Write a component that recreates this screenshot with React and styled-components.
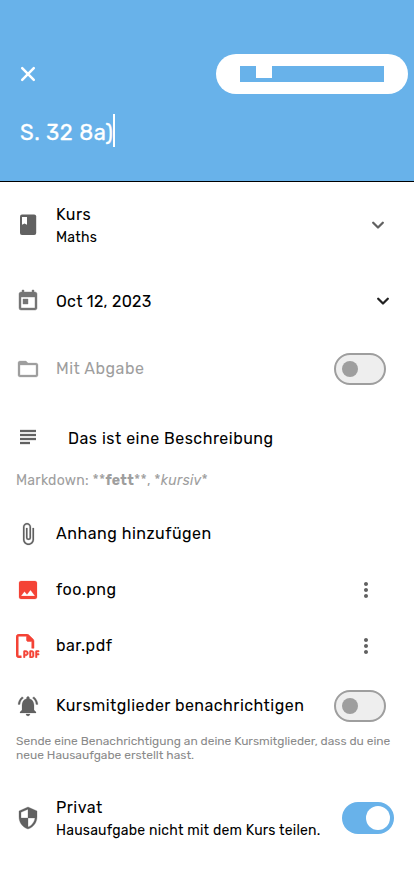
import React from "react";
import styled, { createGlobalStyle } from "styled-components";
import {
  MdToday, MdFolderOpen, MdAttachFile, MdImage,
  MdNotificationsActive, MdSecurity, MdMoreVert,
} from "react-icons/md";
import { FaRegFilePdf } from "react-icons/fa6";

const GlobalStyle = createGlobalStyle`
  * { box-sizing: border-box; }
  body { margin: 0; background: #fff; font-family: Rubik, Roboto, sans-serif; color: #000; }
`;

const Page = styled.main`
  width: 414px;
  height: 896px;
  overflow: hidden;
  background: #fff;
`;

const Header = styled.header`
  height: 182px;
  padding-top: 54px;
  background: #68b2ea;
  border-bottom: 1px solid #000;
`;

const Toolbar = styled.div`
  display: flex;
  align-items: center;
  justify-content: space-between;
  height: 40px;
  padding: 0 6px 0 16px;
  color: #fff;
`;

const SaveButton = styled.button`
  display: flex;
  width: 192px;
  height: 40px;
  padding: 12px 24px;
  border: 0;
  border-radius: 20px;
  background: #fff;
`;

const Redaction = styled.span`
  width: 144px;
  height: 16px;
  padding-left: 16px;
  background: #68b2ea;
`;

const Notch = styled.span`
  display: block;
  width: 16px;
  height: 12px;
  background: #fff;
`;

const TitleField = styled.div`
  display: flex;
  height: 33px;
  margin: 20px 0 0 20px;
  color: #fff;
  font-size: 22px;
  line-height: 37px;
  letter-spacing: 0.5px;
  -webkit-text-stroke: 0.3px #fff;
  white-space: nowrap;
`;

const Caret = styled.span`
  width: 2px;
  height: 33px;
  background: #fff;
`;

const Row = styled.section`
  display: flex;
  align-items: center;
  height: ${(p) => p.$height}px;
  padding: ${(p) => p.$top ?? 0}px ${(p) => p.$end ?? 24}px 0 16px;
  color: ${(p) => p.$color ?? "#000"};
`;

const IconBox = styled.span`
  display: flex;
  width: 24px;
  height: 24px;
  flex: none;
  margin-right: ${(p) => p.$gap ?? 16}px;
  margin-bottom: ${(p) => p.$lift ?? 0}px;
  color: ${(p) => p.$color ?? "#616161"};

  path[fill="none"] {
    stroke: none;
  }
`;

const Texts = styled.div`
  flex: 1;
  min-width: 0;
  padding-top: ${(p) => p.$drop ?? 0}px;
  white-space: nowrap;
`;

const Label = styled.div`
  font-size: 16px;
  line-height: 24px;
  letter-spacing: ${(p) => p.$spacing ?? 0.5}px;
`;

const SubLabel = styled.div`
  font-size: 14px;
  line-height: 22px;
  letter-spacing: ${(p) => p.$spacing ?? 0.25}px;
`;

const Hint = styled.p`
  height: ${(p) => p.$height}px;
  margin: 0 0 0 16px;
  padding-top: ${(p) => p.$top ?? 0}px;
  color: ${(p) => p.$color};
  font-size: ${(p) => p.$size}px;
  line-height: ${(p) => p.$line}px;
  letter-spacing: ${(p) => p.$spacing}px;
  white-space: nowrap;
`;

const HintLine = styled.span`
  display: block;
`;

const Track = styled.button`
  display: flex;
  flex: none;
  align-items: center;
  justify-content: ${(p) => (p.$on ? "flex-end" : "flex-start")};
  width: 52px;
  height: 32px;
  padding: 0 ${(p) => (p.$on ? 4 : 6)}px;
  border: ${(p) => (p.$on ? "0" : "2px solid #9e9e9e")};
  border-radius: 16px;
  background: ${(p) => (p.$on ? "#68b2ea" : "#eee")};
`;

const Thumb = styled.span`
  width: ${(p) => (p.$on ? 24 : 16)}px;
  height: ${(p) => (p.$on ? 24 : 16)}px;
  border-radius: 50%;
  background: ${(p) => (p.$on ? "#fff" : "#9e9e9e")};
`;

const Toggle = ({ on = false }) => (
  <Track $on={on} role="switch" aria-checked={on}>
    <Thumb $on={on} />
  </Track>
);

const StrokeIcon = ({ d, color = "currentColor", width = 2.3, cap = "round" }) => (
  <svg width="24" height="24" viewBox="0 0 24 24" fill="none" stroke={color}
    strokeWidth={width} strokeLinecap={cap} strokeLinejoin="round">
    <path d={d} />
  </svg>
);

const Chevron = ({ color }) => <StrokeIcon color={color} d="M7.2 9.8L12 14.5l4.8-4.7" />;

const SubjectIcon = () => (
  <svg width="24" height="24" viewBox="0 0 24 24" fill="none" stroke="currentColor" strokeWidth="2.3">
    <g>
      <line x1="4" y1="6" x2="20" y2="6" />
      <line x1="4" y1="10" x2="20" y2="10" />
      <line x1="4" y1="14" x2="20" y2="14" />
      <line x1="4" y1="18" x2="14" y2="18" />
    </g>
  </svg>
);

const BookIcon = () => (
  <svg width="24" height="24" viewBox="0 0 24 24">
    <rect x="4" y="1.5" width="16.2" height="20.5" rx="2" fill="currentColor" />
    <path d="M6 4h5v7.8L8.5 10.5 6 11.8z" fill="#fff" />
  </svg>
);

export default function App() {
  return (
    <>
      <GlobalStyle />
      <Page>
        <Header>
          <Toolbar>
            <StrokeIcon d="M6.2 6.2l11.6 11.6M17.8 6.2L6.2 17.8" width={2.5} />
            <SaveButton><Redaction><Notch /></Redaction></SaveButton>
          </Toolbar>
          <TitleField>S. 32 8a)<Caret /></TitleField>
        </Header>

        <Row $height={86}>
          <IconBox><BookIcon /></IconBox>
          <Texts $drop={2}>
            <Label>Kurs</Label>
            <SubLabel>Maths</SubLabel>
          </Texts>
          <Chevron color="#616161" />
        </Row>

        <Row $height={66} $end={19}>
          <IconBox $color="#757575"><MdToday size={24} strokeWidth={0.4} /></IconBox>
          <Texts $drop={2}><Label $spacing={0.25}>Oct 12, 2023</Label></Texts>
          <Chevron color="#212121" />
        </Row>

        <Row $height={70} $end={28} $color="#9e9e9e">
          <IconBox $color="#9e9e9e"><MdFolderOpen size={24} strokeWidth={0.3} /></IconBox>
          <Texts><Label>Mit Abgabe</Label></Texts>
          <Toggle />
        </Row>

        <Row $height={68}>
          <IconBox $gap={28} $lift={2}><SubjectIcon /></IconBox>
          <Texts $drop={2}><Label>Das ist eine Beschreibung</Label></Texts>
        </Row>
        <Hint $height={34} $top={1} $size={14} $line={16} $spacing={0.25} $color="#9e9e9e">
          Markdown: **<b>fett</b>**, *<i>kursiv</i>*
        </Hint>

        <Row $height={56}>
          <IconBox><MdAttachFile size={24} strokeWidth={0.2} /></IconBox>
          <Texts><Label>Anhang hinzufügen</Label></Texts>
        </Row>
        <Row $height={56} $end={36}>
          <IconBox $color="#f44336"><MdImage size={24} strokeWidth={0.2} /></IconBox>
          <Texts><Label>foo.png</Label></Texts>
          <MdMoreVert size={24} color="#616161" />
        </Row>
        <Row $height={56} $end={36}>
          <IconBox $color="#f44336"><FaRegFilePdf size={24} strokeWidth={10} /></IconBox>
          <Texts><Label>bar.pdf</Label></Texts>
          <MdMoreVert size={24} color="#616161" />
        </Row>

        <Row $height={60} $top={4} $end={28}>
          <IconBox><MdNotificationsActive size={24} strokeWidth={0.2} /></IconBox>
          <Texts><Label $spacing={0.47}>Kursmitglieder benachrichtigen</Label></Texts>
          <Toggle />
        </Row>
        <Hint $height={28} $size={12} $line={14} $spacing={-0.01} $color="#8a8a8a">
          <HintLine>Sende eine Benachrichtigung an deine Kursmitglieder, dass du eine</HintLine>
          <HintLine>neue Hausaufgabe erstellt hast.</HintLine>
        </Hint>

        <Row $height={112} $end={20}>
          <IconBox><MdSecurity size={24} strokeWidth={0.3} /></IconBox>
          <Texts $drop={2}>
            <Label>Privat</Label>
            <SubLabel $spacing={0.22}>Hausaufgabe nicht mit dem Kurs teilen.</SubLabel>
          </Texts>
          <Toggle on />
        </Row>
      </Page>
    </>
  );
}
